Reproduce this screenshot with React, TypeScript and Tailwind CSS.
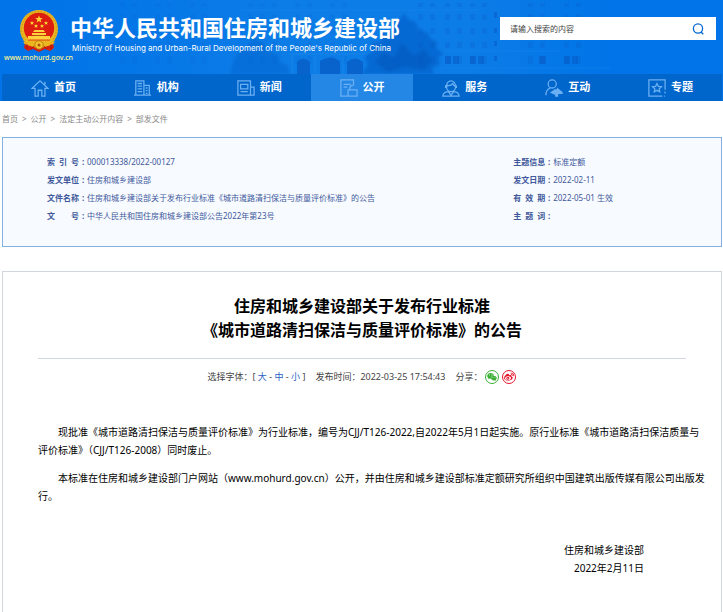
import type { ReactNode } from "react";
import { FaWeixin, FaWeibo } from "react-icons/fa";

function Emblem() {
  return (
    <svg viewBox="0 0 40 42" className="h-[42px] w-10" aria-hidden="true">
      <path d="M7 27L5 38l4 3 5-2 6 3 6-3 5 2 4-3-2-11z" fill="#d7200f" />
      <circle cx="20" cy="19" r="19" fill="#e9b61f" />
      <circle cx="20" cy="19" r="17.400" fill="none" stroke="#c98a12" strokeWidth="1" strokeDasharray="1.400 1.800" />
      <circle cx="20" cy="18" r="15.200" fill="#dc1d10" />
      <path d="M20 5.500l1 2.600h2.800l-2.200 1.700.8 2.700-2.400-1.600-2.400 1.600.8-2.700-2.200-1.700H19z" fill="#ffd632" />
      <g fill="#ffd632">
        <path d="M13 11l.6 1.300h1.400l-1 1 .4 1.400-1.400-.8-1.400.8.4-1.400-1-1h1.400z" />
        <path d="M27 11l.6 1.300h1.400l-1 1 .4 1.400-1.400-.8-1.400.8.4-1.400-1-1h1.400z" />
        <path d="M17 14l.6 1.300h1.400l-1 1 .4 1.400-1.400-.8-1.400.8.4-1.400-1-1h1.400z" />
        <path d="M23 14l.6 1.300h1.400l-1 1 .4 1.400-1.400-.8-1.400.8.4-1.400-1-1h1.400z" />
      </g>
      <path d="M14 22l1.500-2h9l1.500 2zM13 23h14v2H13zM9 26h22v4H9z" fill="#ffd23c" />
      <path d="M15 25h10v1H15z" fill="#b8500f" />
      <path d="M4 30h32l-4 4H8z" fill="#e9b61f" />
      <path d="M9 30h22" stroke="#dc1d10" strokeWidth=".8" />
      <circle cx="20" cy="35" r="4.200" fill="#f2c52c" stroke="#a8670c" strokeWidth=".7" />
      <circle cx="20" cy="35" r="1.500" fill="#b8500f" />
      <path d="M5 32c2 4 7 3 10 3M35 32c-2 4-7 3-10 3" stroke="#f0b91f" strokeWidth="1.500" fill="none" />
      <path d="M12 39l3-3M28 39l-3-3M8 34v5M32 34v5" stroke="#8f160b" strokeWidth=".7" />
    </svg>
  );
}

const windowColumns = [120, 132, 155, 167, 190, 202, 248, 260, 272, 295, 307, 330, 342, 418, 430, 445, 457, 470, 482, 528, 540, 564, 576];

function Backdrop() {
  return (
    <svg className="absolute inset-0 h-full w-full" viewBox="0 0 723 101" preserveAspectRatio="xMidYMin slice" aria-hidden="true">
      <defs>
        <linearGradient id="fade" x1="0" x2="1">
          <stop offset="0.05" stopColor="#0f7ee6" stopOpacity="0" />
          <stop offset="0.4" stopColor="#0f7ee6" stopOpacity="0.8" />
          <stop offset="0.65" stopColor="#0f7ee6" stopOpacity="0.8" />
          <stop offset="0.85" stopColor="#0f7ee6" stopOpacity="0" />
        </linearGradient>
        <filter id="soft" x="-10%" y="-10%" width="120%" height="120%">
          <feGaussianBlur stdDeviation="1.500" />
        </filter>
      </defs>
      <rect width="723" height="74" fill="url(#fade)" />
      {windowColumns.map((x) => (
        <g key={x} fill="#0961cd" opacity={x > 400 ? 0.28 : 0.14}>
          <rect x={x} y="3" width="5" height="4" />
          <rect x={x} y="14" width="5" height="6" />
          <rect x={x} y="28" width="5" height="6" />
          <rect x={x} y="42" width="5" height="6" />
          <rect x={x} y="56" width="5" height="8" />
        </g>
      ))}
      <g fill="#0858c4" opacity=".5">
        <path d="M445 56h6v8h-6zM453 56h6v8h-6zM470 56h6v8h-6zM478 56h6v8h-6zM539 56h7v8h-7zM564 56h6v8h-6zM572 56h6v8h-6z" />
        <path d="M494 12h3v6h-3zM494 28h3v5h-3zM494 41h3v5h-3zM494 56h3v5h-3z" />
      </g>
      <path d="M240 10h240M440 51h120M440 68h170" stroke="#2995ee" strokeWidth="1" opacity=".25" />
      <path d="M297 74V62q6-7 13 0v12zM320 74V61q10-7 20 0v13zM347 74V62q8-7 16 0v12z" fill="#0753bb" opacity=".6" />
      <path d="M292 74V54h76M315 56v18M343 56v18" fill="none" stroke="#2995ee" opacity=".4" />
      <g filter="url(#soft)">
        <path d="M362 74l6-9-3-9 8-4-2-9 10-2 3-8 8-1 3-9 5-4 4-6 5 7 7 2 3 9 8 1 4 7 6 3-1 6 7 5-5 5 2 6-8 4 2 6z" fill="#0759c2" opacity=".55" />
        <path d="M375 62l9-10 10 6 8-15 12 13 10-7 8 12-8 9-18-4-18 6z" fill="#064fb2" opacity=".4" />
        <path d="M230 74l4-14 6-10 8-3 6-9 9 5 5 8 10 3 2 8 8 4 2 8z" fill="#075fc9" opacity=".42" />
      </g>
    </svg>
  );
}

const icons: Record<string, ReactNode> = {
  home: <path d="M1 10.500L10 2l9 8.500h-3.500V19H12v-6.500H8V19H4.500v-8.500zM15.500 3v3" />,
  building: <path d="M2 18V2h9v16M11 7h6v11M0 18h19M4 5h5M4 8h5M4 11h5M4 14h5M13 10h2M13 13h2M13 16h2" />,
  news: <path d="M1 18V2h14v16zM15 9h4v9h-4M4 6h8v5H4zM4 14h8" />,
  open: <path d="M8 19H1V1h14v6M4 6h8M4 9h4M9 12h10v7H9zM11 12V9.500q0-2.500 4-2.500" />,
  service: <path d="M5 8a5 6 0 0 1 10 0M6 7c3 1 5-1 6-2 0 2 2 3 3 3v1a5 5 0 0 1-10 0zM4 7v3M16 7v3M1 19c0-3 3-5 6-5l3 4 3-4c3 0 6 2 6 5z" />,
  exchange: (
    <>
      <circle cx="8" cy="5.500" r="4.500" />
      <path d="M1 18c0-5 2-7 5-8" />
      <path d="M7 15l4-3h3v-1l5 4v1h-5v3h-2v-2z" fill="currentColor" />
    </>
  ),
  star: <path d="M19 12V1H1v18h15M19 14v2M18 19h1M10 5l1.500 3.200 3.500.4-2.600 2.300.7 3.400L10 12.600l-3.100 1.700.7-3.400L5 8.600l3.500-.4z" />,
};

const nav = [
  ["首页", "home"],
  ["机构", "building"],
  ["新闻", "news"],
  ["公开", "open"],
  ["服务", "service"],
  ["互动", "exchange"],
  ["专题", "star"],
];

const leftInfo = [
  ["索 引 号", "000013338/2022-00127"],
  ["发文单位", "住房和城乡建设部"],
  ["文件名称", "住房和城乡建设部关于发布行业标准《城市道路清扫保洁与质量评价标准》的公告"],
  ["文 号", "中华人民共和国住房和城乡建设部公告2022年第23号"],
];

const rightInfo = [
  ["主题信息", "标准定额"],
  ["发文日期", "2022-02-11"],
  ["有 效 期", "2022-05-01 生效"],
  ["主 题 词", ""],
];

function InfoList({ rows }: { rows: string[][] }) {
  return (
    <dl>
      {rows.map(([label, value]) => (
        <div key={label} className="flex whitespace-nowrap">
          <dt className="flex font-bold">
            <span className="w-8 text-justify [text-align-last:justify]">{label}</span>
            <span className="w-2 text-center">:</span>
          </dt>
          <dd>{value}</dd>
        </div>
      ))}
    </dl>
  );
}

export default function App() {
  return (
    <div className="flex min-h-screen flex-col bg-white font-['Noto_Sans','Noto_Sans_CJK_SC',sans-serif] text-black">
      <header className="relative bg-[#0074e8]">
        <Backdrop />
        <div className="relative flex h-[74px] items-start px-[7px]">
          <div className="flex w-[63px] flex-col items-center pt-[10px]">
            <Emblem />
            <a href="#" className="text-[7px] leading-3 font-medium whitespace-nowrap text-[#fff58c]">www.mohurd.gov.cn</a>
          </div>
          <div className="pt-3 whitespace-nowrap text-white">
            <h1 className="text-[22px] leading-[30px] font-bold">中华人民共和国住房和城乡建设部</h1>
            <p className="pl-[2px] font-['Inter',sans-serif] text-[8px] leading-3">Ministry of Housing and Urban-Rural Development of the People's Republic of China</p>
          </div>
          <form className="mt-[17px] ml-auto flex h-[23px] w-[216px] bg-white">
            <input aria-label="搜索" placeholder="请输入搜索的内容" className="min-w-0 flex-1 px-[10px] text-[8px] outline-none placeholder:text-[#444]" />
            <button type="button" aria-label="搜索" className="flex w-9 items-center justify-center text-[#0067cf]">
              <svg viewBox="0 0 12 12" className="h-3 w-3" fill="none" stroke="currentColor" strokeWidth="1.300">
                <circle cx="6" cy="5.500" r="4.600" />
                <path d="M9 9l2.300 2.300" />
              </svg>
            </button>
          </form>
        </div>
        <nav className="relative mr-px ml-[2px] flex h-[27px] bg-[#0066cb]">
          {nav.map(([label, icon]) => (
            <a
              key={label}
              href="#"
              className={`flex flex-1 items-center justify-center gap-[5px] text-[11px] font-bold text-white ${label === "公开" ? "bg-[#2487e6]" : ""}`}
            >
              <svg viewBox="0 0 20 20" className="h-[18px] w-[18px] text-[#6cb0f4]" fill="none" stroke="currentColor" strokeWidth="1.400" aria-hidden="true">
                {icons[icon]}
              </svg>
              {label}
            </a>
          ))}
        </nav>
      </header>

      <nav aria-label="面包屑" className="flex h-9 items-center gap-1 pl-[2px] text-[8px] text-[#888]">
        <a href="#">首页</a>
        <span>&gt;</span>
        <a href="#">公开</a>
        <span>&gt;</span>
        <a href="#">法定主动公开内容</a>
        <span>&gt;</span>
        <a href="#">部发文件</a>
      </nav>

      <section className="mr-px ml-[2px] flex h-[110px] justify-between border border-[#85b0e0] bg-[#f7faff] pt-[15px] pr-[108px] pl-11 text-[8px] leading-[18px] text-[#41599b]">
        <InfoList rows={leftInfo} />
        <InfoList rows={rightInfo} />
      </section>

      <main className="mt-6 mr-px ml-[2px] flex-1 border border-b-0 border-[#d0d5de]">
        <h2 className="mx-[35px] border-b border-[#d0d5de] pt-[22px] pb-4 text-center text-[16px] leading-6 font-bold">
          住房和城乡建设部关于发布行业标准
          <br />
          《城市道路清扫保洁与质量评价标准》的公告
        </h2>
        <div className="flex h-9 items-center justify-center gap-[10px] text-[9px] whitespace-nowrap text-[#444]">
          <div>
            选择字体：[ <button type="button" className="text-[#2b62c4]">大</button> - <button type="button" className="text-[#2b62c4]">中</button> - <button type="button" className="text-[#2b62c4]">小</button> ]
          </div>
          <div>发布时间：2022-03-25 17:54:43</div>
          <div className="flex items-center gap-[3px]">
            分享：
            <button type="button" aria-label="微信" className="flex h-[14px] w-[14px] items-center justify-center rounded-full border border-[#3bb034] text-[#3bb034]">
              <FaWeixin size={10} />
            </button>
            <button type="button" aria-label="微博" className="flex h-[14px] w-[14px] items-center justify-center rounded-full border border-[#e6162d] text-[#e6162d]">
              <FaWeibo size={10} />
            </button>
          </div>
        </div>
        <article className="pt-[28px] pr-3 pb-8 pl-[35px] text-[10px] leading-[18px]">
          <p className="mb-[10px] indent-5">
            现批准《城市道路清扫保洁与质量评价标准》为行业标准，编号为CJJ/T126-2022,自2022年5月1日起实施。原行业标准《城市道路清扫保洁质量与评价标准》（CJJ/T126-2008）同时废止。
          </p>
          <p className="indent-5">
            本标准在住房和城乡建设部门户网站（www.mohurd.gov.cn）公开，并由住房和城乡建设部标准定额研究所组织中国建筑出版传媒有限公司出版发行。
          </p>
          <p className="mt-9 pr-[65px] text-right">
            住房和城乡建设部
            <br />
            2022年2月11日
          </p>
        </article>
      </main>
    </div>
  );
}
